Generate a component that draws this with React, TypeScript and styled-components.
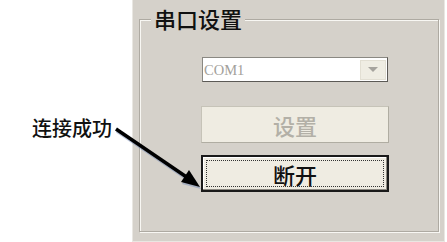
import React from "react";
import styled, { createGlobalStyle } from "styled-components";

const GlobalStyle = createGlobalStyle`
  html, body { margin: 0; padding: 0; background: #ffffff; }
  body { font-family: "Noto Sans CJK SC", "Noto Sans", sans-serif; }
`;

const Page = styled.div`
  position: relative;
  display: flex;
  width: 447px;
  height: 242px;
  background: #ffffff;
  overflow: hidden;
`;

const LeftArea = styled.div`
  width: 132px;
  padding: 116px 0 0 32px;
  box-sizing: border-box;
`;

const Label = styled.div`
  font-family: "Noto Sans CJK SC", sans-serif;
  font-weight: 500;
  font-size: 20px;
  line-height: 24px;
  color: #111;
  white-space: nowrap;
`;

const Panel = styled.div`
  width: 313px;
  height: 242px;
  box-sizing: border-box;
  background: #d5d1ca;
  border-left: 1px solid #e9e7e2;
  border-right: 1px solid #e9e7e2;
  border-bottom: 1px solid #e9e7e2;
  padding: 19px 0 0 6px;
`;

const GroupBox = styled.div`
  position: relative;
  width: 300px;
  height: 213px;
  box-sizing: border-box;
  border: 1px solid #aeaaa2;
  box-shadow: inset 1px 1px 0 #f8f7f3, 1px 1px 0 #f8f7f3;
`;

const GroupTitle = styled.div`
  position: absolute;
  top: -14px;
  left: 11px;
  padding: 0 3px;
  background: #d5d1ca;
  font-family: "Noto Sans CJK SC", sans-serif;
  font-weight: 500;
  font-size: 22px;
  line-height: 24px;
  color: #111;
`;

const Content = styled.div`
  display: flex;
  flex-direction: column;
  align-items: flex-start;
  padding: 37px 0 0 61px;
`;

const Combo = styled.div`
  display: flex;
  align-items: center;
  justify-content: space-between;
  margin-left: 1px;
  width: 186px;
  height: 25px;
  box-sizing: border-box;
  background: #ffffff;
  border: 1px solid #8a8882;
  border-right-color: #5c5a56;
  border-bottom-color: #5c5a56;
  padding: 0 1px 0 1px;
`;

const ComboText = styled.span`
  font-family: "Liberation Serif", serif;
  font-size: 14.5px;
  line-height: 20px;
  color: #a3a19b;
`;

const ComboButton = styled.div`
  display: flex;
  align-items: center;
  justify-content: center;
  width: 26px;
  height: 20px;
  box-sizing: border-box;
  background: #efede3;
  border: 1px solid #e2dfd3;
`;

const Button = styled.div<{ $focused?: boolean; $disabled?: boolean }>`
  position: relative;
  display: flex;
  align-items: center;
  justify-content: center;
  width: 188px;
  height: 37px;
  box-sizing: border-box;
  background: #efece2;
  font-family: "Noto Sans CJK SC", sans-serif;
  font-weight: 500;
  font-size: 22px;
  line-height: 24px;
  color: ${(p) => (p.$disabled ? "#b3b0a7" : "#111")};
  border: ${(p) => (p.$focused ? "2px solid #1a1a1a" : "1px solid #c6c3b8")};
  ${(p) =>
    !p.$focused
      ? "border-right-color: #b0ada2; border-bottom-color: #b0ada2;"
      : "box-shadow: inset -1px -1px 0 #8d8a82, inset 1px 1px 0 #ffffff;"}
`;

const FocusRing = styled.div`
  position: absolute;
  inset: 3px;
  border: 1px dotted #333;
`;

const Overlay = styled.svg`
  position: absolute;
  left: 0;
  top: 0;
  pointer-events: none;
`;

export default function App() {
  return (
    <>
      <GlobalStyle />
      <Page>
        <LeftArea>
          <Label>连接成功</Label>
        </LeftArea>
        <Panel>
          <GroupBox>
            <GroupTitle>串口设置</GroupTitle>
            <Content>
              <Combo>
                <ComboText>COM1</ComboText>
                <ComboButton>
                  <svg width="10" height="6" viewBox="0 0 10 6">
                    <polygon points="0,0 10,0 5,5" fill="#a6a49e" />
                  </svg>
                </ComboButton>
              </Combo>
              <Button $disabled style={{ marginTop: 24 }}>设置</Button>
              <Button $focused style={{ marginTop: 12 }}>
                <FocusRing />
                断开
              </Button>
            </Content>
          </GroupBox>
        </Panel>
        <Overlay width="447" height="242" viewBox="0 0 447 242">
          <g opacity="0.45" transform="translate(1,2)">
            <line x1="116" y1="129" x2="188" y2="178" stroke="#6f86b5" strokeWidth="3.5" />
            <polygon points="200,187 181,182 189,170" fill="#6f86b5" />
          </g>
          <line x1="116" y1="129" x2="188" y2="178" stroke="#000" strokeWidth="3.5" />
          <polygon points="200,187 181,182 189,170" fill="#000" />
        </Overlay>
      </Page>
    </>
  );
}
